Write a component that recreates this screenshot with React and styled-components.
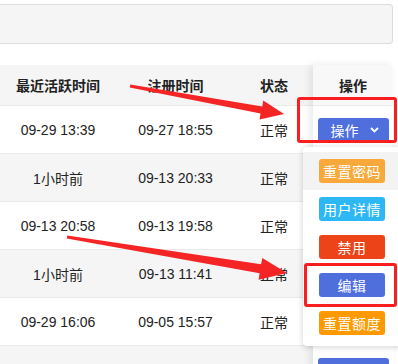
import React from "react";
import styled, { createGlobalStyle } from "styled-components";

const GlobalStyle = createGlobalStyle`
  body {
    margin: 0;
    background: #fff;
    font-family: "Liberation Sans", "Noto Sans CJK SC", sans-serif;
    color: #222;
  }
`;

const Page = styled.div`
  position: relative;
  width: 398px;
  height: 364px;
  overflow: hidden;
  padding-top: 4px;
  box-sizing: border-box;
`;

const SearchBar = styled.div`
  width: 393px;
  height: 40px;
  box-sizing: border-box;
  background: #f5f5f5;
  border: 1px solid #dcdcdc;
  border-left: none;
  border-radius: 0 4px 4px 0;
`;

const Table = styled.div`
  display: flex;
  width: 393px;
  margin-top: 21px;
  font-size: 14px;
`;

const Main = styled.div`
  width: 313px;
`;

const Row = styled.div`
  display: grid;
  grid-template-columns: 116px 119px 78px;
  height: ${p => (p.$head ? 40 : 47)}px;
  border-bottom: 1px solid #e8eaec;
  background: ${p => (p.$head || p.$striped ? "#f5f5f5" : "#fff")};
  font-weight: ${p => (p.$head ? 700 : 400)};
`;

const Cell = styled.div`
  display: flex;
  align-items: center;
  justify-content: center;
  white-space: nowrap;
`;

const FixedCol = styled.div`
  width: 80px;
  position: relative;
  box-shadow: -3px 0 8px rgba(0, 0, 0, 0.09);
`;

const FixedCell = styled.div`
  display: flex;
  align-items: center;
  justify-content: center;
  height: ${p => (p.$head ? 40 : 47)}px;
  border-bottom: 1px solid #e8eaec;
  background: ${p => (p.$head ? "#f8f8f9" : "#fff")};
  font-weight: ${p => (p.$head ? 700 : 400)};
  border-radius: ${p => (p.$head ? "0 4px 0 0" : "0")};
`;

const OpButton = styled.div`
  display: flex;
  align-items: center;
  gap: 11px;
  width: 71px;
  height: 24px;
  box-sizing: border-box;
  padding-left: 13px;
  border-radius: 3px;
  background: #4f6fdd;
  color: #fff;
  font-size: 14px;
`;

const Menu = styled.div`
  position: absolute;
  left: 303px;
  top: 147px;
  width: 110px;
  padding: 5px 0 4px;
  background: #fff;
  box-shadow: 0 1px 6px rgba(0, 0, 0, 0.18);
  border-radius: 4px;
`;

const MenuItem = styled.div`
  height: 38px;
  display: flex;
  align-items: center;
  padding-left: 16px;
  background: ${p => (p.$hover ? "#f3f3f3" : "transparent")};
`;

const MenuButton = styled.div`
  width: 66px;
  height: 24px;
  border-radius: 3px;
  background: ${p => p.$color};
  color: #fff;
  font-size: 14px;
  display: flex;
  align-items: center;
  justify-content: center;
  letter-spacing: 0.5px;
`;

const Mark = styled.div`
  position: absolute;
  left: ${p => p.$x}px;
  top: ${p => p.$y}px;
  width: ${p => p.$w}px;
  height: ${p => p.$h}px;
  box-sizing: border-box;
  border: 3px solid #fa1e1e;
  border-radius: 3px;
`;

const Arrows = styled.svg`
  position: absolute;
  left: 0;
  top: 0;
  pointer-events: none;
`;

const rows = [
  ["09-29 13:39", "09-27 18:55", "正常"],
  ["1小时前", "09-13 20:33", "正常"],
  ["09-13 20:58", "09-13 19:58", "正常"],
  ["1小时前", "09-13 11:41", "正常"],
  ["09-29 16:06", "09-05 15:57", "正常"],
  ["", "", "正常"],
];

// rows whose action button sits under the open dropdown are left empty
const hiddenUnderMenu = [1, 2, 3, 4];

const menu = [
  { label: "重置密码", color: "#f9a83a", hover: true },
  { label: "用户详情", color: "#2db7f5" },
  { label: "禁用", color: "#ec4318" },
  { label: "编辑", color: "#4f6fdd" },
  { label: "重置额度", color: "#ff9900" },
];

const Chevron = () => (
  <svg width="9" height="6" viewBox="0 0 9 6">
    <path d="M1 1l3.5 3.5L8 1" fill="none" stroke="#fff" strokeWidth="1.8" />
  </svg>
);

export default function App() {
  return (
    <>
      <GlobalStyle />
      <Page>
        <SearchBar />
        <Table>
          <Main>
            <Row $head>
              <Cell>最近活跃时间</Cell>
              <Cell>注册时间</Cell>
              <Cell>状态</Cell>
            </Row>
            {rows.map((r, i) => (
              <Row key={i} $striped={i % 2 === 1}>
                <Cell>{r[0]}</Cell>
                <Cell>{r[1]}</Cell>
                <Cell>{r[2]}</Cell>
              </Row>
            ))}
          </Main>
          <FixedCol>
            <FixedCell $head>操作</FixedCell>
            {rows.map((r, i) => (
              <FixedCell key={i}>
                {!hiddenUnderMenu.includes(i) && (
                  <OpButton>
                    操作 <Chevron />
                  </OpButton>
                )}
              </FixedCell>
            ))}
          </FixedCol>
        </Table>

        <Menu>
          {menu.map(m => (
            <MenuItem key={m.label} $hover={m.hover}>
              <MenuButton $color={m.color}>{m.label}</MenuButton>
            </MenuItem>
          ))}
        </Menu>

        <Arrows width="398" height="364" viewBox="0 0 398 364">
          <polygon
            fill="#f52525"
            points="130.3,84.6 262.3,106.5 263.2,100.6 284,114 259.6,119.4 260.5,113.4 129.7,87.4"
          />
          <polygon
            fill="#f52525"
            points="67.3,235.6 261.1,264.3 262.3,257.9 287,273 258.6,279.7 259.6,273.2 66.7,238.4"
          />
        </Arrows>
        <Mark $x={297} $y={97} $w={100} $h={46} />
        <Mark $x={304} $y={263} $w={93} $h={44} />
      </Page>
    </>
  );
}
